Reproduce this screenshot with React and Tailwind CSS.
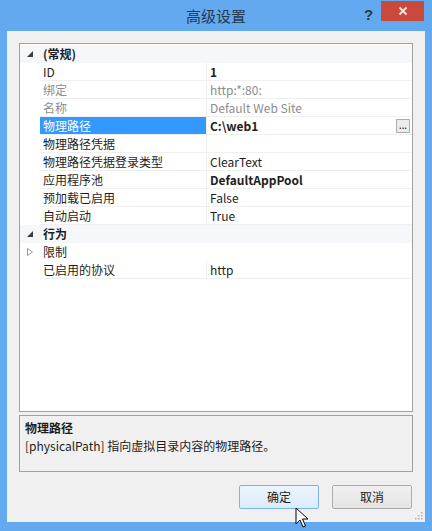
import React from "react";

const font = { fontFamily: '"Microsoft YaHei", "Noto Sans CJK SC", "Noto Sans", sans-serif' };

function Row({ label, value, dim, bold, selected, button }) {
  return (
    <div className="flex h-[18px] items-stretch">
      <div className="w-[20px] shrink-0" />
      <div
        className={
          "w-[166px] shrink-0 pl-[3px] flex items-center border-b border-[#f0f0f0] " +
          (selected ? "bg-[#3399ff] text-white" : dim ? "text-[#8d8d8d]" : "text-[#1e1e1e]")
        }
      >
        {label}
      </div>
      <div className="w-px bg-[#f0f0f0]" />
      <div
        className={
          "flex-1 pl-[3px] pr-[2px] flex items-center justify-between border-b border-[#f0f0f0] " +
          (dim ? "text-[#8d8d8d]" : "text-[#1e1e1e]") +
          (bold ? " font-bold" : "")
        }
      >
        <span>{value}</span>
        {button && (
          <span className="w-[14px] h-[14px] border border-[#adadad] bg-[#ececec] flex items-end justify-center pb-[2px] text-[8px] leading-none text-[#333]">
            ...
          </span>
        )}
      </div>
    </div>
  );
}

function Category({ label }) {
  return (
    <div className="flex h-[18px] items-center bg-[#f5f7fb] font-bold text-[#1e1e1e]">
      <div className="w-[20px] shrink-0 flex items-center justify-center">
        <svg width="6" height="6" viewBox="0 0 6 6">
          <polygon points="6,0 6,6 0,6" fill="#3c3c3c" />
        </svg>
      </div>
      <div className="pl-[3px]">{label}</div>
    </div>
  );
}

export default function App() {
  return (
    <div className="relative w-[432px] h-[531px] bg-[#63a9ef] flex flex-col text-[12px] overflow-hidden" style={font}>
      <div className="h-[31px] relative flex items-center justify-center shrink-0">
        <span className="text-[15px] text-[#253a4e] mt-[1px]">高级设置</span>
        <span className="absolute left-[364px] top-[4px] text-[15px] font-bold text-[#2a3a4a]" style={{ fontFamily: "Arial, sans-serif" }}>?</span>
        <div className="absolute left-[381px] top-[1px] w-[43px] h-[20px] bg-[#c9493d] flex items-center justify-center">
          <svg width="10" height="10" viewBox="0 0 10 10">
            <path d="M1.5 1.5 L8.5 8.5 M8.5 1.5 L1.5 8.5" stroke="#f6e2de" strokeWidth="2" />
          </svg>
        </div>
      </div>
      <div className="mx-[7px] mb-[9px] flex-1 bg-[#f0f0f0] flex flex-col px-[12px] pt-[12px] relative">
        <div className="h-[369px] border border-[#a0a0a0] bg-white flex flex-col pt-px">
          <Category label="(常规)" />
          <Row label="ID" value="1" bold />
          <Row label="绑定" value="http:*:80:" dim />
          <Row label="名称" value="Default Web Site" dim />
          <Row label="物理路径" value="C:\web1" bold selected button />
          <Row label="物理路径凭据" value="" />
          <Row label="物理路径凭据登录类型" value="ClearText" />
          <Row label="应用程序池" value="DefaultAppPool" bold />
          <Row label="预加载已启用" value="False" />
          <Row label="自动启动" value="True" />
          <Category label="行为" />
          <div className="flex h-[18px] items-center">
            <div className="w-[20px] shrink-0 flex items-center justify-center">
              <svg width="6" height="8" viewBox="0 0 6 8">
                <polygon points="0.5,0.5 5.5,4 0.5,7.5" fill="none" stroke="#9a9a9a" strokeWidth="1" />
              </svg>
            </div>
            <div className="pl-[3px] text-[#1e1e1e]">限制</div>
          </div>
          <Row label="已启用的协议" value="http" />
        </div>
        <div className="mt-[3px] h-[57px] border border-[#a0a0a0] bg-[#f0f0f0] px-[5px] pt-[3px] text-[#1e1e1e] leading-[18px]">
          <div className="font-bold">物理路径</div>
          <div>[physicalPath] 指向虚拟目录内容的物理路径。</div>
        </div>
        <div className="flex justify-end gap-[13px] mt-[13px] pr-px">
          <button className="w-[80px] h-[24px] border border-[#7eb4ea] rounded-[2px] bg-gradient-to-b from-[#ecf4fc] to-[#dcecfc] text-[#1e1e1e] text-[12px]" style={font}>
            确定
          </button>
          <button className="w-[80px] h-[24px] border border-[#acacac] rounded-[2px] bg-gradient-to-b from-[#f0f0f0] to-[#e5e5e5] text-[#1e1e1e] text-[12px]" style={font}>
            取消
          </button>
        </div>
        <svg className="absolute right-[2px] bottom-[2px]" width="8" height="8" viewBox="0 0 8 8">
          <rect x="6" y="0" width="1.5" height="1.5" fill="#b0b0b0" />
          <rect x="3" y="3" width="1.5" height="1.5" fill="#b0b0b0" />
          <rect x="6" y="3" width="1.5" height="1.5" fill="#b0b0b0" />
          <rect x="0" y="6" width="1.5" height="1.5" fill="#b0b0b0" />
          <rect x="3" y="6" width="1.5" height="1.5" fill="#b0b0b0" />
          <rect x="6" y="6" width="1.5" height="1.5" fill="#b0b0b0" />
        </svg>
      </div>
      <svg className="absolute left-[295px] top-[507px]" width="14" height="22" viewBox="0 0 14 22">
        <path d="M1 1 L1 17 L5 13 L8 20 L10.5 19 L7.5 12 L13 12 Z" fill="#fff" stroke="#000" strokeWidth="1" strokeLinejoin="round" />
      </svg>
    </div>
  );
}
